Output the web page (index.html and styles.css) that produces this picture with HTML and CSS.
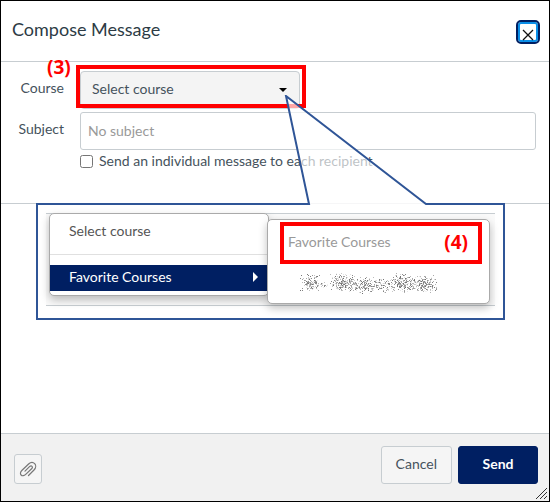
FILE: index.html
```
<!DOCTYPE html>
<html lang="en">
<head>
    <meta charset="UTF-8">
    <meta name="viewport" content="width=device-width, initial-scale=1.0">
    <title>Compose Message</title>
    <link rel="stylesheet" href="styles.css">
</head>
<body>
    <div class="dialog">
        <header class="dialog-header">
            <h2>Compose Message</h2>
            <button type="button" class="close-btn" aria-label="Close">
                <svg width="12" height="12" viewBox="0 0 12 12"><path d="M1 1L11 11M11 1L1 11" stroke="#111" stroke-width="1.3" fill="none"/></svg>
            </button>
        </header>

        <form class="compose-form" id="compose-form">
            <label for="course">Course</label>
            <div class="select-box">
                <select id="course" name="course">
                    <option>Select course</option>
                </select>
                <span class="caret"></span>
                <span class="highlight"></span>
                <span class="step step-3">(3)</span>
            </div>

            <label for="subject">Subject</label>
            <input type="text" id="subject" name="subject" placeholder="No subject">

            <div class="check-row">
                <input type="checkbox" id="individual" name="individual">
                <label for="individual">Send an individual message to each recipient</label>
            </div>
        </form>

        <main class="dialog-body">
            <div class="callout">
                <!-- pointer from the course arrow down to the box -->
                <svg class="pointer" width="145" height="112" viewBox="0 0 145 112">
                    <rect x="26" y="108" width="116" height="3" fill="#fff"/>
                    <rect x="26" y="108" width="114" height="1" fill="#e4e5e7"/>
                    <path d="M25 109L2 1L142 109Z" fill="#fff" fill-opacity=".65"/>
                    <path d="M24 109H25L2 1L142 109H143" fill="none" stroke="#2f5597" stroke-width="2"/>
                </svg>
                <div class="snippet">
                    <ul class="menu">
                        <li><button type="button">Select course</button></li>
                        <li class="divider"></li>
                        <li><button type="button" class="active">Favorite Courses <span class="arrow"></span></button></li>
                    </ul>
                    <div class="submenu">
                        <div class="submenu-title">
                            <span>Favorite Courses</span>
                            <span class="step">(4)</span>
                        </div>
                        <canvas id="scribble" width="140" height="22"></canvas>
                    </div>
                </div>
            </div>
        </main>

        <footer class="dialog-footer">
            <button type="button" class="btn attach-btn" aria-label="Attach">
                <svg width="18" height="18" viewBox="0 0 18 18" fill="none" stroke="#777" stroke-width="1.2" stroke-linecap="round"><path d="M9.5 15.5L15 10C17.3 7.7 16.9 4.9 15.7 3.6C14.3 2.2 11.8 1.9 9.6 4L2.8 10.5C1.1 12.2 1.2 14.1 2.1 15C3.2 16.1 5.1 16 6.7 14.4L12.6 8.7C13.6 7.7 13.5 6.8 13 6.3C12.4 5.7 11.4 5.8 10.5 6.7L6 11.2"/></svg>
            </button>
            <button type="button" class="btn cancel-btn">Cancel</button>
            <button type="submit" form="compose-form" class="btn send-btn">Send</button>
            <svg class="grip" width="12" height="12" viewBox="0 0 12 12"><path d="M0 11L11 0M4 11L11 4M8 11L11 8" stroke="#333" fill="none"/></svg>
        </footer>
    </div>

    <script>
        // scratched out course name, drawn as grey specks
        const ctx = document.getElementById('scribble').getContext('2d');
        let seed = 7;
        const rand = () => {
            seed = (seed * 16807) % 2147483647;
            return seed / 2147483647;
        };
        // x start, x end, y start, y end, number of specks
        const words = [
            [0, 20, 1, 20, 130], [14, 30, 9, 15, 22], [29, 58, 0, 19, 240],
            [48, 80, 4, 21, 180], [73, 95, 5, 21, 80], [88, 115, 0, 20, 210],
            [106, 139, 2, 20, 220]
        ];
        for (const [x1, x2, y1, y2, count] of words) {
            for (let i = 0; i < count; i++) {
                const x = Math.floor(x1 + (rand() + rand()) / 2 * (x2 - x1));
                const y = Math.floor(y1 + (rand() + rand()) / 2 * (y2 - y1));
                const g = Math.floor(110 + rand() * 135);
                ctx.fillStyle = `rgb(${g}, ${g}, ${g})`;
                ctx.fillRect(x, y, 1, 1);
            }
        }
    </script>
</body>
</html>
```
FILE: styles.css
```
* {
  box-sizing: border-box;
}
body {
  margin: 0;
  font-family: Lato, "Liberation Sans", sans-serif;
  font-size: 14px;
  line-height: 20px;
  color: #45525c;
}
button, input, select {
  font: inherit;
  color: inherit;
  margin: 0;
}
.dialog {
  display: flex;
  flex-direction: column;
  min-height: 100vh;
  border: 1px solid #000;
  background: #fff;
}

/* header */
.dialog-header {
  display: flex;
  align-items: center;
  justify-content: space-between;
  height: 61px;
  padding: 0 9px 0 11px;
  border-bottom: 1px solid #c7cdd1;
}
.dialog-header h2 {
  margin: 0;
  padding-bottom: 4px;
  font-size: 18px;
  font-weight: normal;
  line-height: 24px;
  color: #2d3b45;
}
.close-btn {
  display: flex;
  align-items: flex-end;
  justify-content: center;
  width: 24px;
  height: 24px;
  margin-top: 2px;
  padding: 0;
  border: 2px solid #001f62;
  border-radius: 5px;
  background: #fff;
  box-shadow: inset 0 0 0 2px #0a8fe8;
}
.close-btn svg {
  margin-bottom: 1px;
}

/* form */
.compose-form {
  display: grid;
  grid-template-columns: 63px 1fr;
  column-gap: 16px;
  row-gap: 3px;
  padding: 9px 13px 34px 0;
  border-bottom: 1px solid #c7cdd1;
}
.compose-form > label {
  padding-top: 7px;
  text-align: right;
}
.select-box {
  position: relative;
  width: 220px;
  height: 38px;
}
.select-box select {
  appearance: none;
  width: 100%;
  height: 38px;
  padding: 0 11px 2px;
  border: 1px solid #c7cdd1;
  border-radius: 4px;
  background: #f4f4f4;
}
.caret {
  position: absolute;
  right: 13px;
  top: 17px;
  border: 4px solid transparent;
  border-top-color: #000;
  border-bottom: 0;
}
.highlight {
  position: absolute;
  top: -6px;
  right: -6px;
  bottom: 1px;
  left: -4px;
  border: 4px solid #f00;
}
.step {
  color: #f00;
  font-family: "Open Sans", Lato, sans-serif;
  font-size: 19px;
  font-weight: bold;
}
.step-3 {
  position: absolute;
  left: -33px;
  top: -14px;
}
#subject {
  width: 100%;
  height: 38px;
  padding: 0 7px 2px;
  border: 1px solid #c7cdd1;
  border-radius: 3px;
}
#subject::placeholder {
  color: #999;
}
.check-row {
  grid-column: 2;
  display: flex;
  align-items: center;
  gap: 6px;
  height: 16px;
}
.check-row input {
  width: 13px;
  height: 13px;
}

/* body with the callout */
.dialog-body {
  flex: 1;
}
.callout {
  position: relative;
  width: 469px;
  margin: -1px 0 24px 35px;
  padding: 8px 8px 12px;
  border: 2px solid #2f5597;
  background: #fff;
}
.pointer {
  position: absolute;
  left: 246px;
  top: -110px;
}
.snippet {
  display: flex;
  align-items: flex-start;
  border-top: 1px solid #c7cdd1;
  border-bottom: 1px solid #c7cdd1;
  padding-bottom: 1px;
  background: #fafafa;
}
.menu {
  width: 220px;
  margin: -1px 0 0 3px;
  padding: 5px 0 4px;
  list-style: none;
  border: 1px solid #aaa;
  border-radius: 5px;
  background: #fff;
  box-shadow: 0 4px 8px rgba(0, 0, 0, .25);
}
.menu button {
  display: flex;
  align-items: center;
  justify-content: space-between;
  width: 100%;
  height: 26px;
  padding: 0 10px 2px 19px;
  border: 0;
  background: none;
  color: #555;
}
.menu .divider {
  height: 1px;
  margin: 9px 0 10px;
  background: #e0e0e0;
}
.menu button.active {
  background: #001f62;
  color: #fff;
}
.arrow {
  border: 5px solid transparent;
  border-left-color: #fff;
  border-right: 0;
}
.submenu {
  position: relative;
  width: 223px;
  height: 85px;
  margin: 5px 0 0 -2px;
  padding: 2px 7px 0 12px;
  border: 1px solid #aaa;
  border-radius: 5px;
  background: #fff;
  box-shadow: 0 4px 8px rgba(0, 0, 0, .25);
}
.submenu-title {
  display: flex;
  align-items: center;
  justify-content: space-between;
  height: 42px;
  padding: 0 10px 2px 4px;
  border: 4px solid #f00;
  color: #999;
}
#scribble {
  display: block;
  margin: 9px 0 0 20px;
}

/* footer */
.dialog-footer {
  position: relative;
  display: flex;
  align-items: flex-end;
  gap: 6px;
  padding: 12px 11px 17px 13px;
  border-top: 1px solid #c7cdd1;
  background: #f1f1f1;
}
.btn {
  height: 38px;
  padding: 0 14px 2px;
  border: 1px solid #c7cdd1;
  border-radius: 3px;
  background: #f5f5f5;
}
.attach-btn {
  display: flex;
  align-items: center;
  justify-content: center;
  width: 28px;
  height: 30px;
  margin-right: auto;
  padding: 0;
}
.send-btn {
  width: 80px;
  border-color: #001f62;
  background: #001f62;
  color: #fff;
  font-weight: bold;
}
.grip {
  position: absolute;
  right: 1px;
  bottom: 1px;
}
```
